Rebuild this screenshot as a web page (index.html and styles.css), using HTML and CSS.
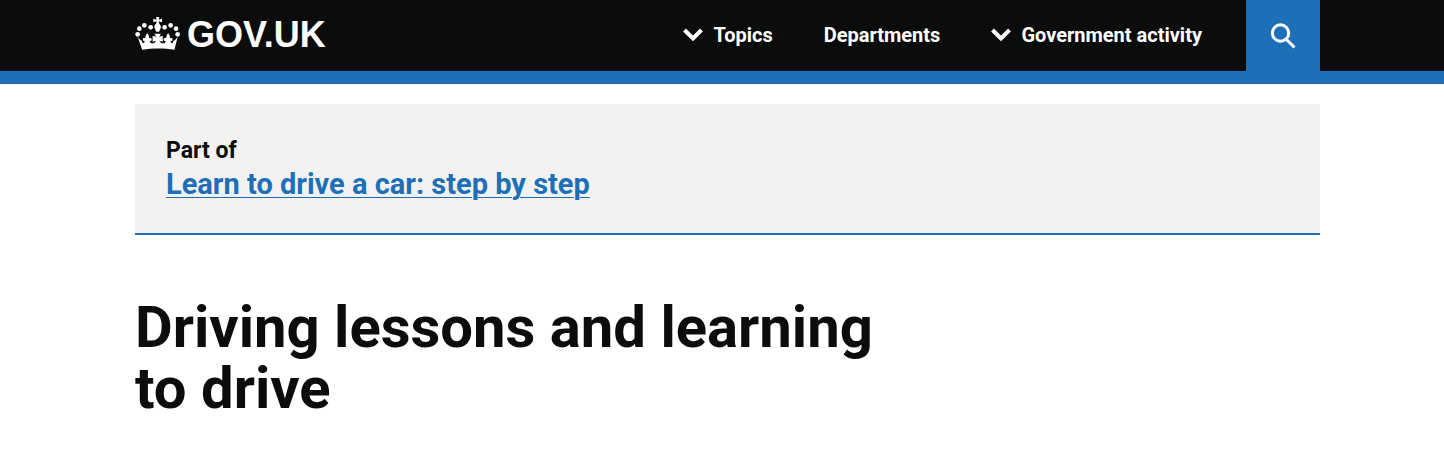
FILE: index.html
```html
<!DOCTYPE html>
<html lang="en">
<head>
<meta charset="utf-8">
<meta name="viewport" content="width=device-width, initial-scale=1">
<title>Driving lessons and learning to drive - GOV.UK</title>
<link rel="stylesheet" href="styles.css">
</head>
<body>
<header class="header">
  <div class="header-inner">
    <a class="logo" href="#">
      <svg class="crown" viewBox="30 35 135 99" aria-hidden="true">
        <g fill="currentColor">
          <circle cx="38" cy="87" r="7"/><circle cx="43" cy="70" r="7"/><circle cx="58" cy="60" r="7"/><circle cx="77" cy="66" r="7"/>
          <circle cx="158" cy="87" r="7"/><circle cx="153" cy="70" r="7"/><circle cx="137" cy="60" r="7"/><circle cx="119" cy="66" r="7"/>
          <path d="M93 35h10l-2 8 10-3v11l-10-3 2 7c4 5 6 9 4 14l-5 10h-8l-5-10c-2-5-1-10 4-14l2-7-10 3V40l10 3z"/>
          <path d="M36 95c5 6 8 10 13 11l3 8c4-1 6-4 6-8-4 2-7-1-6-5 1-4 5-4 8-2-1-6 2-9 6-16 4 7 7 10 6 16 3-2 7-2 8 2 1 4-2 7-6 5 0 5 3 8 8 8 6 0 9-3 12-8l-11 3V91l11 3-5-9h20l-5 9 11-3v18l-11-3c3 5 6 8 12 8 5 0 8-3 8-8-4 2-7-1-6-5 1-4 5-4 8-2-1-6 2-9 6-16 4 7 7 10 6 16 3-2 7-2 8 2 1 4-2 7-6 5 0 4 2 7 6 8l3-8c5-1 8-5 13-11l-10 38c-32-5-70-5-102 0z" transform="translate(4 0) scale(.95 1)"/>
        </g>
      </svg>
      <span class="logo-text">GOV.UK</span>
    </a>
    <nav class="nav" aria-label="Menu">
      <button class="nav-item" type="button">
        <svg class="chevron" viewBox="0 0 20 14" aria-hidden="true"><path d="M1.5 2l8.5 8.5L18.5 2" fill="none" stroke="currentColor" stroke-width="4"/></svg>
        Topics
      </button>
      <a class="nav-item" href="#">Departments</a>
      <button class="nav-item" type="button">
        <svg class="chevron" viewBox="0 0 20 14" aria-hidden="true"><path d="M1.5 2l8.5 8.5L18.5 2" fill="none" stroke="currentColor" stroke-width="4"/></svg>
        Government activity
      </button>
    </nav>
    <button class="search" type="button" aria-label="Search GOV.UK">
      <svg class="search-icon" viewBox="0 0 26 26" aria-hidden="true"><g fill="none" stroke="currentColor" stroke-width="3"><circle cx="10.5" cy="10" r="8.2"/><path d="M16 16l8.5 8.5"/></g></svg>
    </button>
  </div>
</header>
<main class="main">
  <aside class="step">
    <p class="step-label">Part of</p>
    <a class="step-link" href="#">Learn to drive a car: step by step</a>
  </aside>
  <h1 class="title">Driving lessons and learning to drive</h1>
</main>
</body>
</html>
```
FILE: styles.css
```css
body {
  margin: 0;
  background: #fff;
  color: #0b0c0c;
  font-family: Roboto, "Liberation Sans", sans-serif;
  font-weight: 700;
}

.header {
  background: #0b0c0c;
  border-bottom: 13px solid #1d70b8;
}

.header-inner {
  display: flex;
  height: 71px;
  padding: 0 124px 0 135px;
}

.logo {
  display: flex;
  align-items: center;
  gap: 7px;
  margin-right: auto;
  color: #fff;
  text-decoration: none;
}

.crown {
  width: 45px;
  height: 33px;
  padding-bottom: 4px;
}

.logo-text {
  font-family: "Liberation Sans", Arial, sans-serif;
  font-size: 36px;
  line-height: 40px;
  padding-bottom: 2px;
}

.nav {
  display: flex;
  align-items: center;
  gap: 51px;
  margin-right: 44px;
}

.nav-item {
  display: flex;
  align-items: center;
  gap: 10px;
  padding: 0 0 1px;
  border: 0;
  background: none;
  color: #fff;
  font: inherit;
  font-size: 20px;
  line-height: 24px;
  text-decoration: none;
  white-space: nowrap;
}

.chevron {
  width: 20px;
  height: 14px;
}

.search {
  display: flex;
  align-items: center;
  justify-content: center;
  width: 74px;
  padding: 0;
  border: 0;
  background: #1d70b8;
  color: #fff;
}

.search-icon {
  width: 26px;
  height: 26px;
}

.main {
  padding: 20px 124px 0 135px;
}

.step {
  padding: 31px;
  border-bottom: 2px solid #1d70b8;
  background: #f3f2f1;
}

.step-label {
  margin: 0;
  font-size: 23px;
  line-height: 32px;
}

.step-link {
  display: block;
  color: #1d70b8;
  font-size: 29px;
  line-height: 35px;
  text-decoration-thickness: 1px;
  text-underline-offset: 3px;
}

.title {
  max-width: 790px;
  margin: 62px 0 0;
  font-size: 58px;
  line-height: 61px;
}
```
